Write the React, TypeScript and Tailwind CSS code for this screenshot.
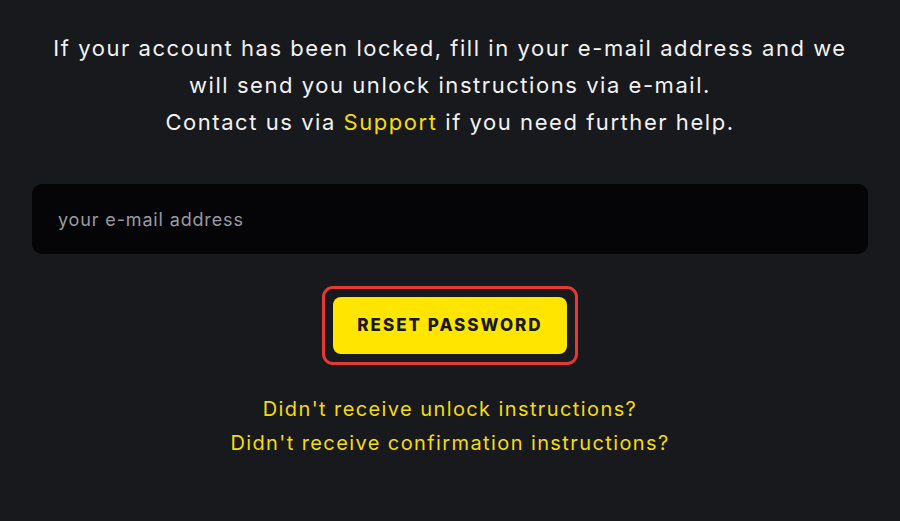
import React from "react";

export default function App() {
  return (
    <div
      className="w-[900px] h-[521px] bg-[#18191d] flex flex-col items-center overflow-hidden"
      style={{ fontFamily: "Inter, 'Noto Sans', sans-serif" }}
    >
      <p className="mt-[30px] text-center text-[22px] leading-[37px] text-[#f2f2f2] tracking-[1.55px] whitespace-nowrap">
        If your account has been locked, fill in your e-mail address and we
        <br />
        will send you unlock instructions via e-mail.
        <br />
        Contact us via <span className="text-[#f5dc0c]">Support</span> if you need further help.
      </p>
      <div className="mt-[43px] w-[836px] h-[70px] rounded-[10px] bg-[#050508] flex items-center px-[26px]">
        <span className="text-[18px] text-[#9a9aa0] tracking-[0.85px]">your e-mail address</span>
      </div>
      <div className="mt-[32px] rounded-[11px] border-[3px] border-[#e53935] p-[8px]">
        <button className="w-[234px] h-[57px] rounded-[8px] bg-[#ffe500] text-[#18191d] font-extrabold text-[17px] tracking-[2px]">
          RESET PASSWORD
        </button>
      </div>
      <div className="mt-[27px] flex flex-col items-center text-[20px] leading-[34px] text-[#f5dc0c] tracking-[1.4px]">
        <span>Didn't receive unlock instructions?</span>
        <span>Didn't receive confirmation instructions?</span>
      </div>
    </div>
  );
}
